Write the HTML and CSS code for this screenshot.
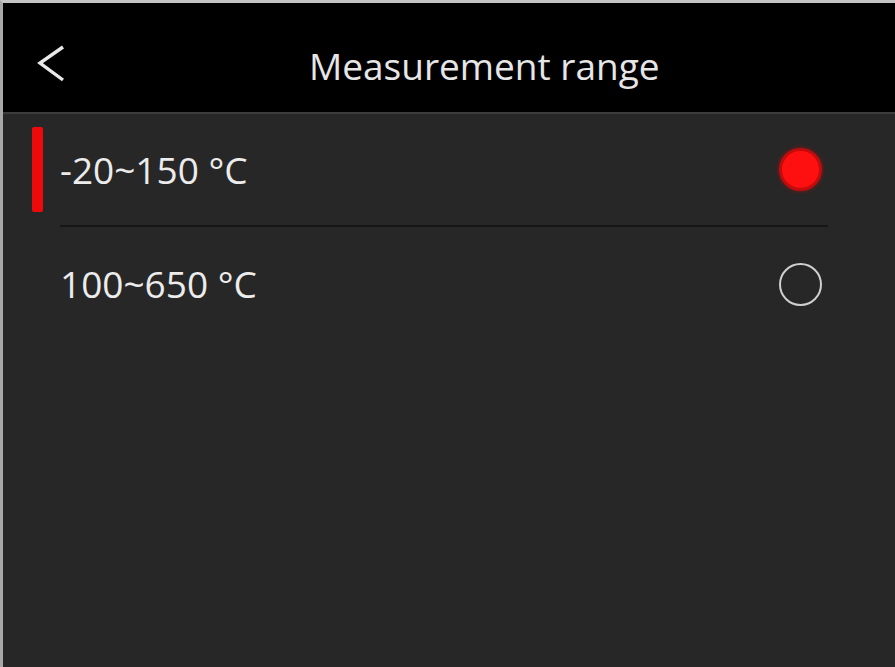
FILE: index.html
```html
<!DOCTYPE html>
<html lang="en">
<head>
	<meta charset="UTF-8">
	<title>Measurement range</title>
	<link rel="stylesheet" href="styles.css">
</head>
<body>
	<div class="screen">
		<div class="header">
			<div class="back">
				<svg width="30" height="40" viewBox="0 0 30 40"><polyline points="26,3 3,19 26,36" fill="none" stroke="#e8e8e8" stroke-width="3.4" stroke-linejoin="miter"/></svg>
			</div>
			<div class="title">Measurement range</div>
		</div>
		<ul class="list">
			<li class="row active">
				<span class="mark"></span>
				<div class="item">
					<span class="label">-20~150 °C</span>
					<span class="radio"></span>
				</div>
			</li>
			<li class="row">
				<span class="mark"></span>
				<div class="item last">
					<span class="label">100~650 °C</span>
					<span class="radio"></span>
				</div>
			</li>
		</ul>
	</div>
</body>
</html>
```

FILE: styles.css
```css
*{margin: 0;padding: 0;box-sizing: border-box;}
ul{list-style: none;}
body{background: #272727;font-family: "Open Sans", "Noto Sans", sans-serif;color: #ececec;}
.screen{width: 895px;height: 667px;border-top: 3px solid #c4c4c4;border-left: 3px solid #a8a8a8;background: #272727;overflow: hidden;}
.header{height: 111px;background: #000;border-bottom: 2px solid #3c3c3c;display: flex;align-items: center;padding-top: 16px;}
.back{width: 30px;height: 40px;margin-left: 34px;margin-top: -3px;}
.back svg{display: block;}
.title{margin-left: 242px;font-size: 37px;color: #e6e6e6;}
.row{display: flex;height: 113px;}
.mark{width: 11px;margin: 13px 17px 15px 29px;border-radius: 2px;}
.row.active .mark{background: #ee0a0a;}
.item{flex: none;width: 768px;display: flex;align-items: center;justify-content: space-between;border-bottom: 2px solid #161616;padding-right: 6px;}
.item.last{border-bottom: none;}
.label{font-size: 37px;color: #ececec;}
.radio{width: 43px;height: 43px;border-radius: 50%;border: 2.5px solid #cfcfcf;margin-top: 2px;}
.row.active .radio{background: #ff1010;border: 3px solid #c00c0c;box-shadow: 0 0 4px rgba(255,0,0,.5);margin-top: 0;}
```
